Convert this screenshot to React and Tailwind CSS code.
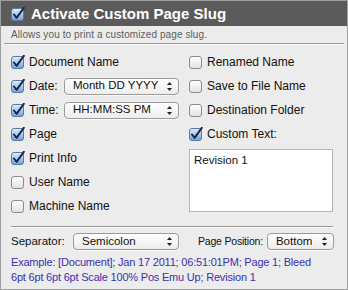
import React from "react";

const Check = ({ checked }) =>
  checked ? (
    <svg width="14" height="14" viewBox="0 0 14 14" className="shrink-0">
      <defs>
        <linearGradient id="cb" x1="0" y1="0" x2="0" y2="1">
          <stop offset="0" stopColor="#e4effc" />
          <stop offset="0.5" stopColor="#a9c8ee" />
          <stop offset="1" stopColor="#6f9fdc" />
        </linearGradient>
      </defs>
      <rect x="0.5" y="1.5" width="12" height="12" rx="2.5" fill="url(#cb)" stroke="#5a7aa6" />
      <path d="M3 7.5 L5.6 10.8 L12.8 0.8" fill="none" stroke="#1b2947" strokeWidth="2" strokeLinejoin="round" strokeLinecap="round" />
    </svg>
  ) : (
    <svg width="14" height="14" viewBox="0 0 14 14" className="shrink-0">
      <defs>
        <linearGradient id="cu" x1="0" y1="0" x2="0" y2="1">
          <stop offset="0" stopColor="#ffffff" />
          <stop offset="1" stopColor="#e2e2e2" />
        </linearGradient>
      </defs>
      <rect x="0.5" y="1.5" width="12" height="12" rx="2.5" fill="url(#cu)" stroke="#8c8c8c" />
    </svg>
  );

const Arrows = () => (
  <svg width="7" height="11" viewBox="0 0 7 11" className="shrink-0">
    <path d="M3.5 1 L6 4 L1 4 Z" fill="#222" />
    <path d="M3.5 10 L6 7 L1 7 Z" fill="#222" />
  </svg>
);

const Popup = ({ label, w }) => (
  <div
    className={`${w} shrink-0 h-[17px] flex items-center justify-between pl-[8px] pr-[5px] rounded-[4px] border border-[#9b9b9b] bg-gradient-to-b from-[#ffffff] to-[#ededed] shadow-[0_1px_0_rgba(255,255,255,0.7)] text-[11.5px] text-[#111]`}
  >
    <span className="leading-none whitespace-nowrap">{label}</span>
    <Arrows />
  </div>
);

const Row = ({ checked, children }) => (
  <div className="h-[24px] flex items-center gap-[4px] whitespace-nowrap">
    <Check checked={checked} />
    {children}
  </div>
);

export default function App() {
  return (
    <div
      className="w-[348px] h-[290px] overflow-hidden bg-[#ececec] border border-[#9e9e9e] text-[#111]"
      style={{ fontFamily: '"Liberation Sans", Arial, sans-serif' }}
    >
      <div className="h-[25px] bg-[#5b5b5b] flex items-center pl-[10px] gap-[6px]">
        <Check checked />
        <span className="text-white font-bold text-[15px] leading-none">Activate Custom Page Slug</span>
      </div>
      <div className="h-[17px] flex items-center pl-[10px] text-[10px] tracking-[0.1px] text-[#5d5d5d]">
        Allows you to print a customized page slug.
      </div>
      <div className="mx-[3px] h-[2px] border-t border-[#9a9a9a] border-b border-b-[#fafafa]" />
      <div className="flex pl-[10px] pt-[5px] text-[12px]">
        <div className="w-[178px] flex flex-col">
          <Row checked>Document Name</Row>
          <Row checked>
            <span className="w-[31px]">Date:</span>
            <Popup label="Month DD YYYY" w="w-[115px]" />
          </Row>
          <Row checked>
            <span className="w-[31px]">Time:</span>
            <Popup label="HH:MM:SS PM" w="w-[115px]" />
          </Row>
          <Row checked>Page</Row>
          <Row checked>Print Info</Row>
          <Row>User Name</Row>
          <Row>Machine Name</Row>
        </div>
        <div className="flex flex-col">
          <Row>Renamed Name</Row>
          <Row>Save to File Name</Row>
          <Row>Destination Folder</Row>
          <Row checked>Custom Text:</Row>
          <div className="mt-[3px] w-[144px] h-[63px] bg-white border border-[#b5b5b5] px-[4px] py-[2px] text-[11.5px]">
            Revision 1
          </div>
        </div>
      </div>
      <div className="ml-[10px] mt-[8px] w-[322px] h-[2px] border-t border-[#9a9a9a] border-b border-b-[#fafafa]" />
      <div className="flex items-center pl-[10px] mt-[5px] h-[17px] text-[11.5px] whitespace-nowrap">
        <span className="w-[62px]">Separator:</span>
        <Popup label="Semicolon" w="w-[106px]" />
        <span className="ml-[19px] text-[10.5px] tracking-[-0.2px]">Page Position:</span>
        <div className="ml-[4px]">
          <Popup label="Bottom" w="w-[67px]" />
        </div>
      </div>
      <div className="pl-[10px] mt-[5px] text-[11px] tracking-[-0.2px] leading-[15px] text-[#3a30b0] whitespace-nowrap">
        Example: [Document]; Jan 17 2011; 06:51:01PM; Page 1; Bleed
        <br />
        6pt 6pt 6pt 6pt Scale 100% Pos Emu Up; Revision 1
      </div>
    </div>
  );
}
